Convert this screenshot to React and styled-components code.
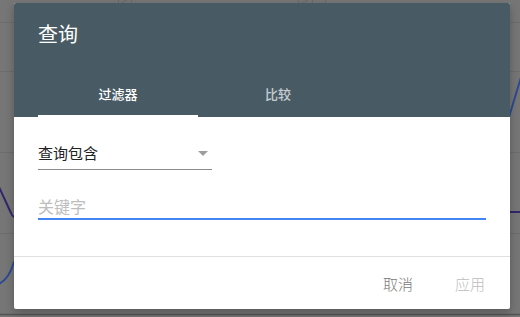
import styled, { createGlobalStyle } from 'styled-components';
import { useState } from 'react';

const GlobalStyle = createGlobalStyle`
  html, body { margin: 0; padding: 0; }
  body {
    width: 520px;
    height: 317px;
    overflow: hidden;
    font-family: "Noto Sans CJK SC", "Noto Sans", sans-serif;
  }
`;

function App() {
  const [tab, setTab] = useState(0);
  const [keyword, setKeyword] = useState('');
  return (
    <Page>
      <GlobalStyle />
      <Backdrop>
        <Chart width="520" height="317" viewBox="0 0 520 317">
          <g stroke="#6c6c6c" strokeWidth="1">
            <line x1="0" y1="22.5" x2="520" y2="22.5" />
            <line x1="0" y1="71.5" x2="520" y2="71.5" />
            <line x1="0" y1="152.5" x2="520" y2="152.5" />
            <line x1="0" y1="233.5" x2="520" y2="233.5" />
          </g>
          <line x1="0" y1="314.5" x2="520" y2="314.5" stroke="#555" strokeWidth="1.5" />
          <g stroke="#6a6a6a" strokeWidth="1" fill="none">
            <line x1="118.5" y1="0" x2="118.5" y2="3" />
            <line x1="131.5" y1="0" x2="131.5" y2="3" />
            <line x1="121" y1="3" x2="127" y2="0" />
            <line x1="298.5" y1="0" x2="298.5" y2="3" />
            <line x1="312.5" y1="0" x2="312.5" y2="3" />
            <line x1="302" y1="3" x2="308" y2="0" />
            <line x1="325.5" y1="0" x2="325.5" y2="3" />
          </g>
          <path d="M-1 187 L11 213 Q13 218 18 218 L505 212 L520 212" stroke="#33266a" strokeWidth="2" fill="none" />
          <path d="M-1 284 Q9 279 14 262 L500 150 L509 117 L522 74" stroke="#2b4a94" strokeWidth="2" fill="none" />
        </Chart>
      </Backdrop>

      <Dialog>
        <Header>
          <Title>查询</Title>
          <Tabs>
            <Tab $active={tab === 0} onClick={() => setTab(0)}>过滤器</Tab>
            <Tab $active={tab === 1} onClick={() => setTab(1)}>比较</Tab>
          </Tabs>
        </Header>

        <Body>
          <Select>
            <span>查询包含</span>
            <Caret />
          </Select>
          <Input
            placeholder="关键字"
            value={keyword}
            onChange={(e) => setKeyword(e.target.value)}
          />
        </Body>

        <Footer>
          <Action>取消</Action>
          <Action $disabled>应用</Action>
        </Footer>
      </Dialog>
    </Page>
  );
}

const Page = styled.div`
  position: relative;
  width: 520px;
  height: 317px;
  overflow: hidden;
`;

const Backdrop = styled.div`
  width: 100%;
  height: 100%;
  background: #767676;
`;

const Chart = styled.svg`
  display: block;
`;

const Dialog = styled.div`
  position: absolute;
  left: 14px;
  top: 3px;
  width: 496px;
  height: 306px;
  background: #fff;
  border-radius: 2px;
  box-shadow: 0 4px 10px rgba(0, 0, 0, 0.25);
  display: flex;
  flex-direction: column;
  overflow: hidden;
`;

const Header = styled.div`
  background: #485b65;
  height: 114px;
  padding: 0 24px;
  box-sizing: border-box;
  display: flex;
  flex-direction: column;
  justify-content: space-between;
`;

const Title = styled.div`
  color: #fff;
  font-size: 20px;
  line-height: 24px;
  padding-top: 19px;
`;

const Tabs = styled.div`
  display: flex;
  height: 48px;
`;

const Tab = styled.div`
  width: 160px;
  display: flex;
  align-items: center;
  justify-content: center;
  font-size: 13px;
  font-weight: 500;
  color: ${(p) => (p.$active ? '#fff' : 'rgba(255,255,255,0.7)')};
  border-bottom: 2px solid ${(p) => (p.$active ? '#fff' : 'transparent')};
  box-sizing: border-box;
  padding-top: 2px;
  cursor: pointer;
`;

const Body = styled.div`
  flex: 1;
  padding: 22px 24px 0;
  display: flex;
  flex-direction: column;
  border-bottom: 1px solid #e0e0e0;
`;

const Select = styled.div`
  width: 174px;
  height: 31px;
  box-sizing: border-box;
  border-bottom: 1px solid #8a8a8a;
  display: flex;
  align-items: center;
  justify-content: space-between;
  padding: 0 4px 4px 0;
  font-size: 15px;
  color: #222;
`;

const Caret = styled.span`
  width: 0;
  height: 0;
  border-left: 5px solid transparent;
  border-right: 5px solid transparent;
  border-top: 5px solid #9e9e9e;
  margin-top: 2px;
`;

const Input = styled.input`
  margin-top: 26px;
  width: 448px;
  border: none;
  border-bottom: 2px solid #4285f4;
  outline: none;
  padding: 0 0 1px;
  font-family: inherit;
  font-size: 16px;
  line-height: 21px;
  color: #222;
  &::placeholder {
    color: #bdbdbd;
  }
`;

const Footer = styled.div`
  height: 52px;
  display: flex;
  align-items: center;
  justify-content: flex-end;
  gap: 42px;
  padding: 0 25px 0 0;
`;

const Action = styled.button`
  border: none;
  background: none;
  padding: 0;
  font-family: inherit;
  font-size: 15px;
  font-weight: 300;
  color: ${(p) => (p.$disabled ? '#bdbdbd' : '#7a7a7a')};
  cursor: ${(p) => (p.$disabled ? 'default' : 'pointer')};
`;

export default App;
